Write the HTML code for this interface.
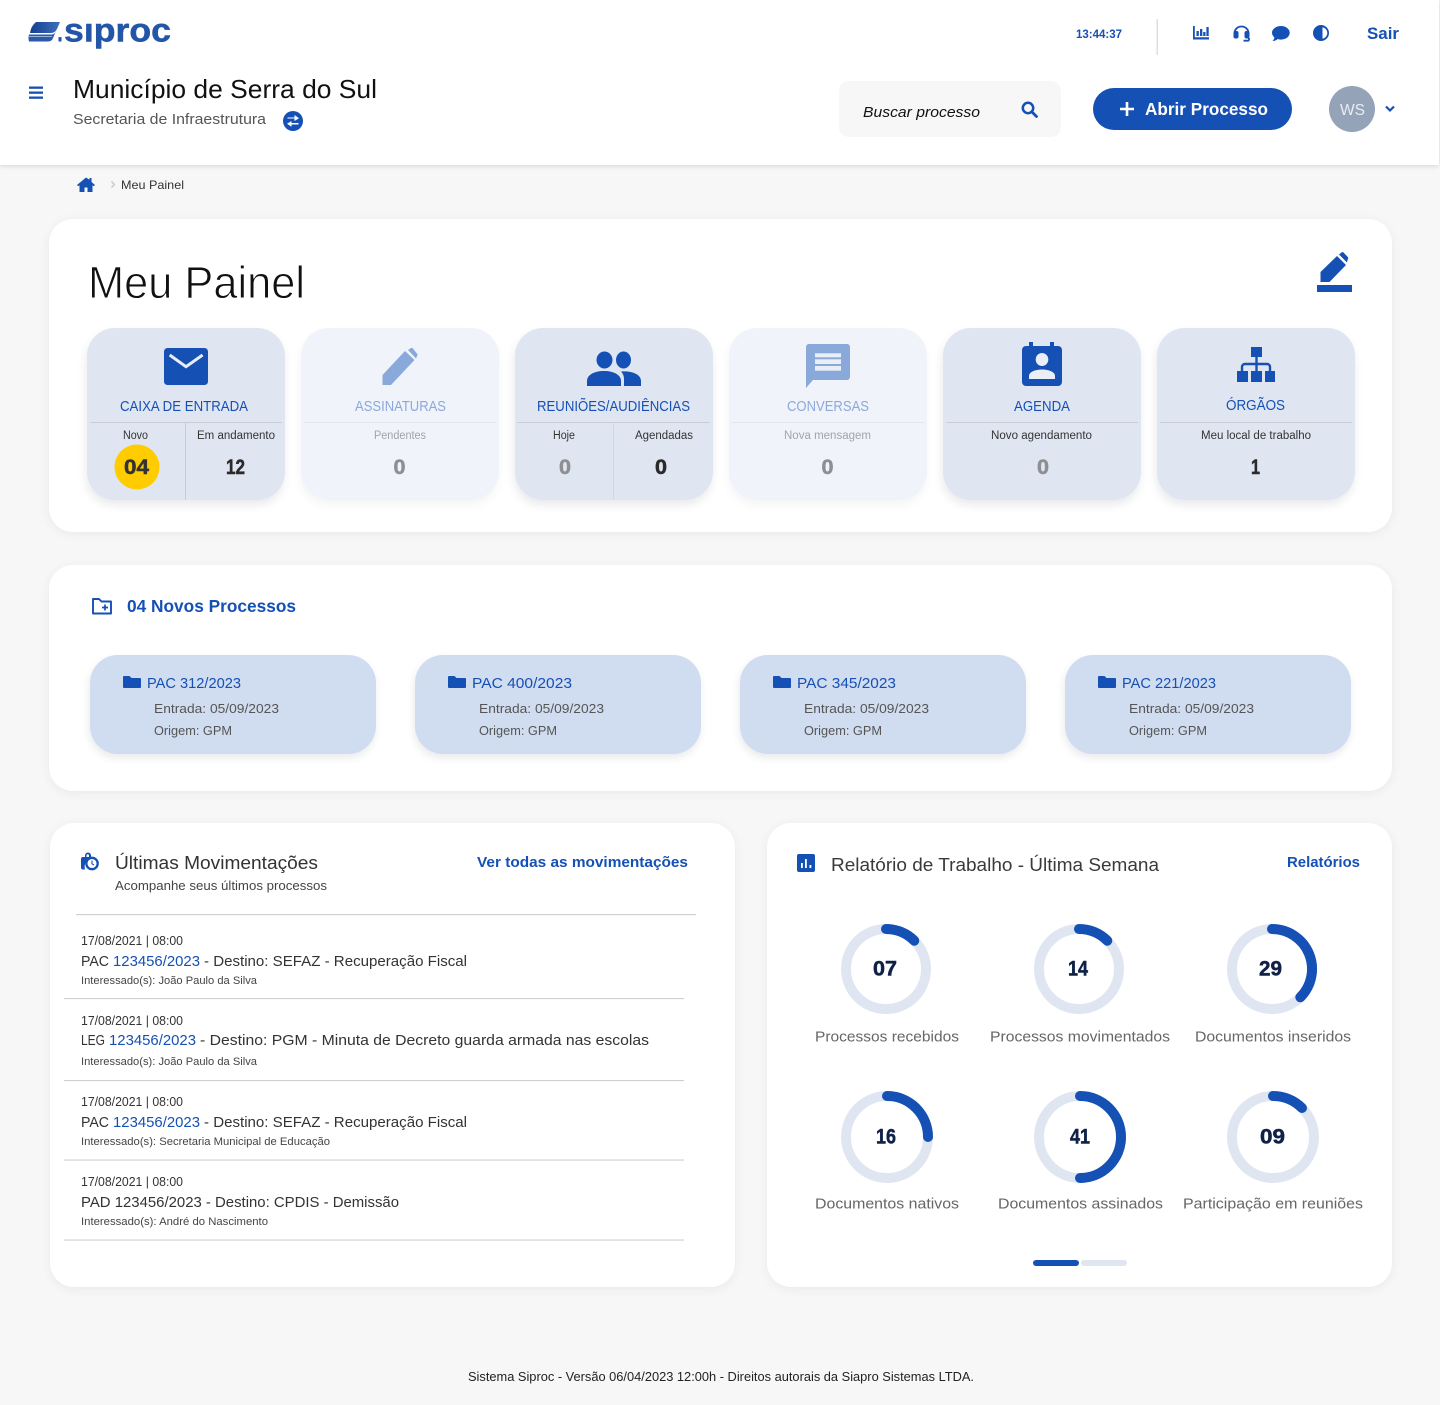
<!DOCTYPE html>
<html lang="pt-BR">
<head>
<meta charset="utf-8">
<title>Meu Painel - Siproc</title>
<style>
html,body{margin:0;padding:0;background:#f7f7f7;}
body{position:relative;width:1440px;height:1405px;overflow:hidden;font-family:"Liberation Sans",sans-serif;}
.b{position:absolute;box-sizing:border-box;}
.card{background:#fff;border-radius:24px;box-shadow:0 2px 10px rgba(40,50,70,.07);}
.tile{background:#e0e6f1;border-radius:28px;top:328px;height:172px;width:198px;box-shadow:-1px 5px 9px rgba(40,50,70,.10);}
.tile.f{background:#f0f3f9;box-shadow:-1px 5px 9px rgba(40,50,70,.05);}
.pt{background:#d0dcf0;border-radius:28px;top:655px;height:99px;width:286px;box-shadow:-1px 4px 8px rgba(40,50,70,.10);}
svg{position:absolute;left:0;top:0;}
text{font-family:"Liberation Sans",sans-serif;white-space:pre;}
.bl{fill:#1550b5;}
.bd{font-weight:700;}
.g{fill:#555;}
.k{fill:#333;}
</style>
</head>
<body>
<div class="b" style="left:0;top:0;width:1439px;height:165px;background:#fff;box-shadow:0 1px 5px rgba(0,0,0,.14);"></div>
<div class="b" style="left:839px;top:81px;width:222px;height:56px;background:#f7f7f7;border-radius:10px;"></div>
<div class="b" style="left:1093px;top:88px;width:199px;height:42px;background:#1550b5;border-radius:21px;"></div>
<div class="b" style="left:1329px;top:86px;width:46px;height:46px;background:#94a3b8;border-radius:50%;"></div>

<div class="b card" style="left:49px;top:219px;width:1343px;height:313px;"></div>
<div class="b tile" style="left:87px;"></div>
<div class="b tile f" style="left:301px;"></div>
<div class="b tile" style="left:515px;"></div>
<div class="b tile f" style="left:729px;"></div>
<div class="b tile" style="left:943px;"></div>
<div class="b tile" style="left:1157px;"></div>

<div class="b card" style="left:49px;top:565px;width:1343px;height:226px;"></div>
<div class="b pt" style="left:90px;"></div>
<div class="b pt" style="left:415px;"></div>
<div class="b pt" style="left:740px;"></div>
<div class="b pt" style="left:1065px;"></div>

<div class="b card" style="left:50px;top:823px;width:685px;height:464px;"></div>
<div class="b card" style="left:767px;top:823px;width:625px;height:464px;"></div>

<svg width="1440" height="1405" viewBox="0 0 1440 1405" xmlns="http://www.w3.org/2000/svg">
<defs>
<linearGradient id="lg" x1="0" x2="1" y1="0" y2="0"><stop offset="0" stop-color="#123f8f"/><stop offset="1" stop-color="#3f70bb"/></linearGradient>
<path id="f" d="M1 0h5.500l2 2H17a1 1 0 0 1 1 1v8a1 1 0 0 1-1 1H1a1 1 0 0 1-1-1V1a1 1 0 0 1 1-1Z"/>
</defs>

<!-- logo -->
<path d="M36 22H60L57 29Q55 33 51 33H30Q31 26 36 22Z" fill="url(#lg)"/>
<path d="M29 34.500H52Q54.500 34.500 56 31L53 38Q52 41.500 48 41.500H29Q28 38 29 34.500Z" fill="#2a5aa8"/>
<path d="M29 36.300H52" stroke="#dfe8f5" stroke-width=".7"/>
<text x="57" y="41.500" font-size="30" font-weight="700" fill="#2456a8" textLength="6" lengthAdjust="spacingAndGlyphs">.</text>
<text x="64" y="41.500" font-size="33.500" font-weight="700" fill="#2456a8" stroke="#2456a8" stroke-width=".5" textLength="107" lengthAdjust="spacingAndGlyphs">sıproc</text>

<!-- header top right -->
<text x="1076" y="38" font-size="11.500" class="bl bd" textLength="46" lengthAdjust="spacingAndGlyphs">13:44:37</text>
<rect x="1156.500" y="19" width="1.500" height="36" fill="#dedede"/>
<g class="bl">
<path d="M1193 26h1.800v11.300H1209V39.500H1193Z"/>
<rect x="1196.500" y="31" width="2.300" height="5"/>
<rect x="1200" y="29" width="2.300" height="7"/>
<rect x="1203.200" y="32" width="2.300" height="4"/>
<rect x="1206.400" y="27" width="2.300" height="9"/>
<rect x="1233.500" y="31" width="5" height="7.500" rx="2"/>
<rect x="1244.500" y="31" width="5" height="7.500" rx="2"/>
<path d="M1281 26c-4.900 0-9 3-9 6.800 0 1.800.9 3.400 2.400 4.600-.1 1.400-.9 2.700-1.900 3.600 2.100 0 3.900-.8 5.200-2 1.100.4 2.200.6 3.300.6 4.900 0 8.700-3 8.700-6.800S1285.900 26 1281 26Z"/>
<path fill-rule="evenodd" d="M1321 25a8 8 0 1 0 0 16 8 8 0 0 0 0-16Zm1.500 2.200a5.900 5.900 0 0 1 0 11.600Z"/>
</g>
<path d="M1234.500 33a7 6.500 0 0 1 14 0M1249 38v1.500a1.200 1.200 0 0 1-1.200 1.200h-4.300" fill="none" stroke="#1550b5" stroke-width="1.800"/>
<text x="1367" y="39" font-size="17" class="bl bd" textLength="32" lengthAdjust="spacingAndGlyphs">Sair</text>

<!-- header second row -->
<rect x="29" y="86.500" width="14" height="2.300" class="bl"/>
<rect x="29" y="91.500" width="14" height="2.300" class="bl"/>
<rect x="29" y="96.500" width="14" height="2.300" class="bl"/>
<text x="73" y="98" font-size="26" fill="#111" textLength="304" lengthAdjust="spacingAndGlyphs">Município de Serra do Sul</text>
<text x="73" y="124" font-size="15" fill="#555" textLength="193" lengthAdjust="spacingAndGlyphs">Secretaria de Infraestrutura</text>
<circle cx="293" cy="121" r="10" class="bl"/>
<path d="M287.500 117.500h7v-2.500l4.500 3.200-4.500 2.800v-2.500h-7Z M298.500 123h-7v-2l-4.500 2.800 4.500 3v-2.300h7Z" fill="#fff"/>
<path d="M86 177.500l-9 7.500 1.200 1.200 1.300-1V192h5v-4.500h3V192h5v-6.800l1.300 1 1.200-1.200-3.500-3V178h-2v1.800Z" class="bl"/>
<path d="M111.500 181.500l3 3-3 3" fill="none" stroke="#c6c6c6" stroke-width="1.300"/>
<text x="121" y="189" font-size="12" fill="#333" textLength="63" lengthAdjust="spacingAndGlyphs">Meu Painel</text>

<text x="863" y="117" font-size="15" font-style="italic" fill="#111" textLength="117" lengthAdjust="spacingAndGlyphs">Buscar processo</text>
<circle cx="1028" cy="108" r="5.200" fill="none" stroke="#1550b5" stroke-width="2.500"/>
<path d="M1032 112l4.500 4.500" stroke="#1550b5" stroke-width="2.800" stroke-linecap="round"/>

<path d="M1127 102v14M1120 109h14" stroke="#fff" stroke-width="2.600"/>
<text x="1145" y="115" font-size="17.500" font-weight="700" fill="#fff" textLength="123" lengthAdjust="spacingAndGlyphs">Abrir Processo</text>
<text x="1340" y="115" font-size="16" fill="#e9edf3" textLength="25" lengthAdjust="spacingAndGlyphs">WS</text>
<path d="M1386 106.500l4 4 4-4" fill="none" stroke="#1550b5" stroke-width="2.200"/>

<!-- Meu Painel -->
<text x="88" y="298" font-size="45" fill="#111" stroke="#fff" stroke-width=".9" textLength="217" lengthAdjust="spacingAndGlyphs">Meu Painel</text>
<g class="bl">
<path d="M1320.500 282V272L1337 256L1346 265L1329.500 282Z"/>
<path d="M1339 254.500l2.500-2a1.500 1.500 0 0 1 2 0l4.300 4.500a1.500 1.500 0 0 1 0 2l-.8 3.500Z"/>
<rect x="1317" y="285" width="35" height="7"/>
</g>

<!-- tile dividers -->
<g fill="#c9ccd2">
<rect x="90" y="422" width="192" height="1"/>
<rect x="517" y="422" width="193" height="1"/>
<rect x="946" y="422" width="192" height="1"/>
<rect x="1160" y="422" width="192" height="1"/>
<rect x="185" y="423" width="1" height="77"/>
<rect x="613" y="423" width="1" height="77" fill="#d2d6dd"/>
</g>
<rect x="304" y="422" width="192" height="1" fill="#e4e6ea"/>
<rect x="732" y="422" width="192" height="1" fill="#e4e6ea"/>

<!-- tile icons -->
<rect x="164" y="348" width="44" height="37" rx="3.500" class="bl"/>
<path d="M169.700 355l16.300 11.700 16.600-11.700" fill="none" stroke="#e9eef7" stroke-width="3"/>

<g fill="#8aa9db">
<path d="M382.500 385V375L405 351L414.500 360L391 385Z"/>
<path d="M408 350l3-2a1.200 1.200 0 0 1 1.500 0l4.800 6a1.200 1.200 0 0 1 0 1.500l-1.300 3Z"/>
</g>

<g class="bl">
<ellipse cx="604.500" cy="360" rx="8" ry="8.500"/>
<ellipse cx="623.500" cy="360" rx="7.500" ry="8.500"/>
<path d="M587 386v-5c0-6 7-10 17-10s17 4 17 10v5Z"/>
<path d="M624 386v-7c0-3-1-5.500-3-7.500 10-1 20 2.500 20 9.500v5Z"/>
</g>

<g>
<path d="M809 344h38a3 3 0 0 1 3 3v30a3 3 0 0 1-3 3h-34l-7 8v-41a3 3 0 0 1 3-3Z" fill="#8aa9db"/>
<rect x="815" y="353.300" width="26" height="4" fill="#e9eef7"/>
<rect x="815" y="359.300" width="26" height="4.700" fill="#e9eef7"/>
<rect x="815" y="366" width="26" height="4.700" fill="#e9eef7"/>
</g>

<g class="bl">
<rect x="1029" y="342" width="4" height="6"/>
<rect x="1050" y="342" width="4" height="6"/>
<rect x="1022" y="346" width="40" height="40" rx="4"/>
</g>
<ellipse cx="1042" cy="359.500" rx="6.300" ry="6.500" fill="#e9eef7"/>
<path d="M1029 379v-3c0-4 6-6.500 13-6.500s13 2.500 13 6.500v3Z" fill="#e9eef7"/>

<g class="bl">
<rect x="1251" y="347" width="11" height="10"/>
<rect x="1237" y="371" width="11" height="11"/>
<rect x="1251" y="371" width="11" height="11"/>
<rect x="1265" y="371" width="10" height="11"/>
</g>
<path d="M1242 372v-5a3 3 0 0 1 3-3h22a3 3 0 0 1 3 3v5M1256.500 357v15" fill="none" stroke="#1550b5" stroke-width="2.400"/>

<!-- tile text -->
<g font-size="14.500">
<text x="120" y="411" class="bl" textLength="128" lengthAdjust="spacingAndGlyphs">CAIXA DE ENTRADA</text>
<text x="355" y="411" fill="#8aa9db" textLength="91" lengthAdjust="spacingAndGlyphs">ASSINATURAS</text>
<text x="537" y="411" class="bl" textLength="153" lengthAdjust="spacingAndGlyphs">REUNIÕES/AUDIÊNCIAS</text>
<text x="787" y="411" fill="#8aa9db" textLength="82" lengthAdjust="spacingAndGlyphs">CONVERSAS</text>
<text x="1014" y="411" class="bl" textLength="56" lengthAdjust="spacingAndGlyphs">AGENDA</text>
<text x="1226" y="410" class="bl" textLength="59" lengthAdjust="spacingAndGlyphs">ÓRGÃOS</text>
</g>
<g font-size="11.500">
<text x="123" y="439" class="k" textLength="25" lengthAdjust="spacingAndGlyphs">Novo</text>
<text x="197" y="439" class="k" textLength="78" lengthAdjust="spacingAndGlyphs">Em andamento</text>
<text x="374" y="439" fill="#a2a4a8" textLength="52" lengthAdjust="spacingAndGlyphs">Pendentes</text>
<text x="553" y="439" class="k" textLength="22" lengthAdjust="spacingAndGlyphs">Hoje</text>
<text x="635" y="439" class="k" textLength="58" lengthAdjust="spacingAndGlyphs">Agendadas</text>
<text x="784" y="439" fill="#a2a4a8" textLength="87" lengthAdjust="spacingAndGlyphs">Nova mensagem</text>
<text x="991" y="439" class="k" textLength="101" lengthAdjust="spacingAndGlyphs">Novo agendamento</text>
<text x="1201" y="439" class="k" textLength="110" lengthAdjust="spacingAndGlyphs">Meu local de trabalho</text>
</g>
<circle cx="137" cy="467" r="22.500" fill="#ffcc00"/>
<g font-size="21" font-weight="700" stroke-width=".5">
<text x="124" y="474" fill="#333" stroke="#333" textLength="25" lengthAdjust="spacingAndGlyphs">04</text>
<text x="226" y="474" fill="#2a2a2a" stroke="#2a2a2a" textLength="19" lengthAdjust="spacingAndGlyphs">12</text>
<text x="393.500" y="474" fill="#8d8f92" stroke="#8d8f92" textLength="12" lengthAdjust="spacingAndGlyphs">0</text>
<text x="559" y="474" fill="#8d8f92" stroke="#8d8f92" textLength="12" lengthAdjust="spacingAndGlyphs">0</text>
<text x="655" y="474" fill="#2a2a2a" stroke="#2a2a2a" textLength="12" lengthAdjust="spacingAndGlyphs">0</text>
<text x="821.500" y="474" fill="#8d8f92" stroke="#8d8f92" textLength="12" lengthAdjust="spacingAndGlyphs">0</text>
<text x="1037" y="474" fill="#8d8f92" stroke="#8d8f92" textLength="12" lengthAdjust="spacingAndGlyphs">0</text>
<text x="1251" y="474" fill="#2a2a2a" stroke="#2a2a2a" textLength="9" lengthAdjust="spacingAndGlyphs">1</text>
</g>

<!-- novos processos -->
<path d="M93 599h6l2.500 2.500H111v12H93Z" fill="none" stroke="#1550b5" stroke-width="1.900" stroke-linejoin="round"/>
<path d="M105 604.500v6M102 607.500h6" stroke="#1550b5" stroke-width="1.700"/>
<text x="127" y="612" font-size="17.500" font-weight="700" class="bl" textLength="169" lengthAdjust="spacingAndGlyphs">04 Novos Processos</text>

<g class="bl">
<use href="#f" x="123" y="676"/>
<use href="#f" x="448" y="676"/>
<use href="#f" x="773" y="676"/>
<use href="#f" x="1098" y="676"/>
</g>
<g font-size="15" class="bl">
<text x="147" y="688" textLength="94" lengthAdjust="spacingAndGlyphs">PAC 312/2023</text>
<text x="472" y="688" textLength="100" lengthAdjust="spacingAndGlyphs">PAC 400/2023</text>
<text x="797" y="688" textLength="99" lengthAdjust="spacingAndGlyphs">PAC 345/2023</text>
<text x="1122" y="688" textLength="94" lengthAdjust="spacingAndGlyphs">PAC 221/2023</text>
</g>
<g font-size="13" class="g">
<text x="154" y="713" textLength="125" lengthAdjust="spacingAndGlyphs">Entrada: 05/09/2023</text>
<text x="154" y="735" textLength="78" lengthAdjust="spacingAndGlyphs">Origem: GPM</text>
<text x="479" y="713" textLength="125" lengthAdjust="spacingAndGlyphs">Entrada: 05/09/2023</text>
<text x="479" y="735" textLength="78" lengthAdjust="spacingAndGlyphs">Origem: GPM</text>
<text x="804" y="713" textLength="125" lengthAdjust="spacingAndGlyphs">Entrada: 05/09/2023</text>
<text x="804" y="735" textLength="78" lengthAdjust="spacingAndGlyphs">Origem: GPM</text>
<text x="1129" y="713" textLength="125" lengthAdjust="spacingAndGlyphs">Entrada: 05/09/2023</text>
<text x="1129" y="735" textLength="78" lengthAdjust="spacingAndGlyphs">Origem: GPM</text>
</g>

<!-- movimentacoes -->
<path d="M85 857v-1.500a3 3 0 0 1 6 0V857h1.500a10 10 0 0 0-7.500 12.500h-2a2 2 0 0 1-2-2V859a2 2 0 0 1 2-2Zm1.500 0H89v-1.500a1.200 1.200 0 0 0-2.500 0Z" class="bl"/>
<circle cx="92" cy="863.500" r="5.700" fill="#fff" stroke="#1550b5" stroke-width="2.300"/>
<path d="M92 860.500v3.300l2 1.200" fill="none" stroke="#1550b5" stroke-width="1.100"/>
<text x="115" y="869" font-size="18" fill="#333" textLength="203" lengthAdjust="spacingAndGlyphs">Últimas Movimentações</text>
<text x="115" y="890" font-size="12.500" fill="#444" textLength="212" lengthAdjust="spacingAndGlyphs">Acompanhe seus últimos processos</text>
<text x="477" y="867" font-size="14.500" font-weight="700" class="bl" textLength="211" lengthAdjust="spacingAndGlyphs">Ver todas as movimentações</text>
<rect x="76" y="914" width="620" height="1.200" fill="#cfcfcf"/>

<g font-size="12.500" fill="#333">
<text x="81" y="945" textLength="102" lengthAdjust="spacingAndGlyphs">17/08/2021 | 08:00</text>
<text x="81" y="1025" textLength="102" lengthAdjust="spacingAndGlyphs">17/08/2021 | 08:00</text>
<text x="81" y="1106" textLength="102" lengthAdjust="spacingAndGlyphs">17/08/2021 | 08:00</text>
<text x="81" y="1186" textLength="102" lengthAdjust="spacingAndGlyphs">17/08/2021 | 08:00</text>
</g>
<g font-size="15" fill="#333">
<text x="81" y="966" textLength="28" lengthAdjust="spacingAndGlyphs">PAC</text>
<text x="113" y="966" fill="#1550b5" textLength="87" lengthAdjust="spacingAndGlyphs">123456/2023</text>
<text x="204" y="966" textLength="263" lengthAdjust="spacingAndGlyphs">- Destino: SEFAZ - Recuperação Fiscal</text>
<text x="81" y="1045" textLength="24" lengthAdjust="spacingAndGlyphs">LEG</text>
<text x="109" y="1045" fill="#1550b5" textLength="87" lengthAdjust="spacingAndGlyphs">123456/2023</text>
<text x="200" y="1045" textLength="449" lengthAdjust="spacingAndGlyphs">- Destino: PGM - Minuta de Decreto guarda armada nas escolas</text>
<text x="81" y="1127" textLength="28" lengthAdjust="spacingAndGlyphs">PAC</text>
<text x="113" y="1127" fill="#1550b5" textLength="87" lengthAdjust="spacingAndGlyphs">123456/2023</text>
<text x="204" y="1127" textLength="263" lengthAdjust="spacingAndGlyphs">- Destino: SEFAZ - Recuperação Fiscal</text>
<text x="81" y="1207" textLength="318" lengthAdjust="spacingAndGlyphs">PAD 123456/2023 - Destino: CPDIS - Demissão</text>
</g>
<g font-size="11" fill="#444">
<text x="81" y="984" textLength="176" lengthAdjust="spacingAndGlyphs">Interessado(s): João Paulo da Silva</text>
<text x="81" y="1065" textLength="176" lengthAdjust="spacingAndGlyphs">Interessado(s): João Paulo da Silva</text>
<text x="81" y="1145" textLength="249" lengthAdjust="spacingAndGlyphs">Interessado(s): Secretaria Municipal de Educação</text>
<text x="81" y="1225" textLength="187" lengthAdjust="spacingAndGlyphs">Interessado(s): André do Nascimento</text>
</g>
<g fill="#cfcfcf">
<rect x="64" y="998" width="620" height="1.100"/>
<rect x="64" y="1080" width="620" height="1.100"/>
<rect x="64" y="1159.500" width="620" height="1.100"/>
<rect x="64" y="1239.500" width="620" height="1.100"/>
</g>

<!-- relatorio -->
<rect x="797" y="854" width="18" height="18" rx="2" class="bl"/>
<g fill="#fff"><rect x="801" y="863" width="1.800" height="5"/><rect x="805" y="859" width="1.800" height="9"/><rect x="809.500" y="865" width="1.800" height="3"/></g>
<text x="831" y="871" font-size="18.500" fill="#3a3a3a" textLength="328" lengthAdjust="spacingAndGlyphs">Relatório de Trabalho - Última Semana</text>
<text x="1287" y="867" font-size="14.500" font-weight="700" class="bl" textLength="73" lengthAdjust="spacingAndGlyphs">Relatórios</text>

<g fill="none" stroke="#e0e6f1" stroke-width="10">
<circle cx="886" cy="969" r="40"/>
<circle cx="1079" cy="969" r="40"/>
<circle cx="1272" cy="969" r="40"/>
<circle cx="887" cy="1137" r="41"/>
<circle cx="1080" cy="1137" r="41"/>
<circle cx="1273" cy="1137" r="41"/>
</g>
<g fill="none" stroke="#1550b5" stroke-width="10" stroke-linecap="round">
<path d="M886 929A40 40 0 0 1 914.300 940.700"/>
<path d="M1079 929A40 40 0 0 1 1107.300 940.700"/>
<path d="M1272 929A40 40 0 0 1 1300.300 997.300"/>
<path d="M887 1096A41 41 0 0 1 928 1137"/>
<path d="M1080 1096A41 41 0 0 1 1080 1178"/>
<path d="M1273 1096A41 41 0 0 1 1302 1108"/>
</g>
<g font-size="21.500" font-weight="700" fill="#0f2147" stroke="#0f2147" stroke-width=".5">
<text x="873" y="975.500" textLength="24" lengthAdjust="spacingAndGlyphs">07</text>
<text x="1068" y="975.500" textLength="20" lengthAdjust="spacingAndGlyphs">14</text>
<text x="1259" y="975.500" textLength="23" lengthAdjust="spacingAndGlyphs">29</text>
<text x="876" y="1143.500" textLength="20" lengthAdjust="spacingAndGlyphs">16</text>
<text x="1070" y="1143.500" textLength="20" lengthAdjust="spacingAndGlyphs">41</text>
<text x="1260" y="1143.500" textLength="25" lengthAdjust="spacingAndGlyphs">09</text>
</g>
<g font-size="15" fill="#666">
<text x="815" y="1041.500" textLength="144" lengthAdjust="spacingAndGlyphs">Processos recebidos</text>
<text x="990" y="1041.500" textLength="180" lengthAdjust="spacingAndGlyphs">Processos movimentados</text>
<text x="1195" y="1041.500" textLength="156" lengthAdjust="spacingAndGlyphs">Documentos inseridos</text>
<text x="815" y="1208.500" textLength="144" lengthAdjust="spacingAndGlyphs">Documentos nativos</text>
<text x="998" y="1208.500" textLength="165" lengthAdjust="spacingAndGlyphs">Documentos assinados</text>
<text x="1183" y="1208.500" textLength="180" lengthAdjust="spacingAndGlyphs">Participação em reuniões</text>
</g>
<rect x="1033" y="1260" width="46" height="6" rx="3" class="bl"/>
<rect x="1081" y="1260" width="46" height="6" rx="3" fill="#e0e6f1"/>

<text x="468" y="1381" font-size="12.500" fill="#222" textLength="506" lengthAdjust="spacingAndGlyphs">Sistema Siproc - Versão 06/04/2023 12:00h - Direitos autorais da Siapro Sistemas LTDA.</text>
</svg>
</body>
</html>
